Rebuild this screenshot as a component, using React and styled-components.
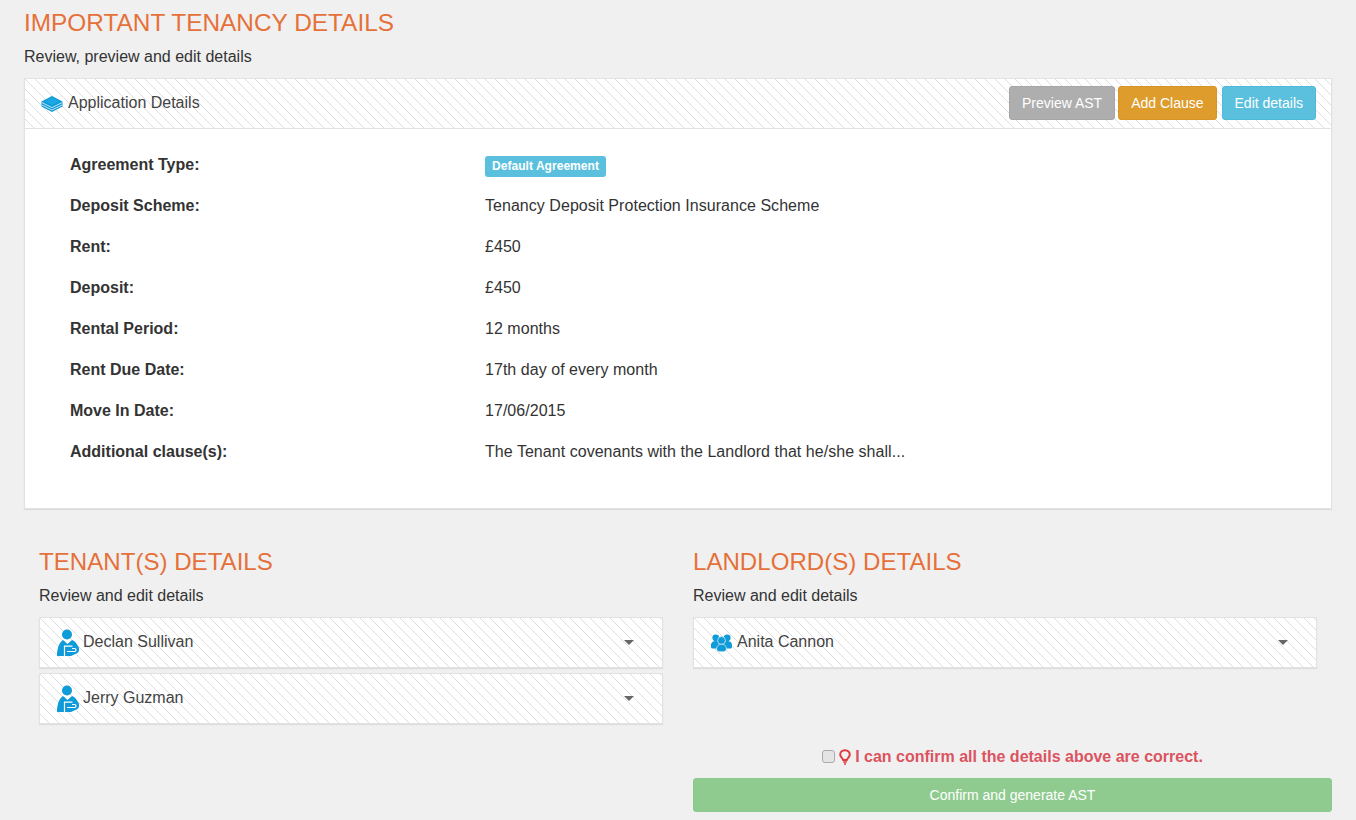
import React from 'react'
import styled, { createGlobalStyle } from 'styled-components'

const GlobalStyle = createGlobalStyle`
  html, body {
    margin: 0;
    padding: 0;
    background: #f0f0f0;
  }
  body {
    font-family: "Liberation Sans", Arial, sans-serif;
    font-size: 16px;
    line-height: 20px;
    color: #333;
  }
`

const hatch = `
  background-color: #fff;
  background-image: linear-gradient(45deg, #dedede 0, #dedede 5%, transparent 5%, transparent 50%, #dedede 50%, #dedede 55%, transparent 55%);
  background-size: 10px 10px;
`

const Page = styled.div`
  width: 1356px;
  height: 820px;
  overflow: hidden;
  padding: 9px 24px 0;
  box-sizing: border-box;
`

const Title = styled.h2`
  margin: 0;
  font-size: ${p => p.$size || 24.1}px;
  line-height: 28px;
  font-weight: 400;
  text-transform: uppercase;
  color: #e6703a;
`

const Sub = styled.p`
  margin: 10px 0 0;
  line-height: 20px;
  color: #333;
`

const Panel = styled.section`
  margin-top: 11px;
  height: 431px;
  box-sizing: border-box;
  background: #fff;
  border: 1px solid #e2e2e2;
  box-shadow: 0 1px 1px rgba(0, 0, 0, 0.08);
`

const PanelHead = styled.header`
  ${hatch}
  height: 50px;
  box-sizing: border-box;
  border-bottom: 1px solid #e2e2e2;
  display: flex;
  align-items: center;
  justify-content: space-between;
  padding: 0 15px 0 16px;
`

const HeadTitle = styled.div`
  display: flex;
  align-items: center;
  gap: 5px;
  color: #444;
`

const HeadText = styled.span`
  margin-top: -2px;
`

const Actions = styled.div`
  display: flex;
  margin-top: -1px;
`

const Btn = styled.button`
  height: 34px;
  padding: 0 12px;
  margin-left: ${p => p.$gap || 0}px;
  font: 14px "Liberation Sans", Arial, sans-serif;
  color: #fff;
  border-radius: 3px;
  border: 1px solid ${p => p.$border};
  background: ${p => p.$bg};
`

const Details = styled.dl`
  margin: 0;
  padding: 15px 45px 0;
  display: grid;
  grid-template-columns: 415px 1fr;
  grid-auto-rows: 41px;
  align-items: center;
`

const Label = styled.dt`
  font-weight: 700;
  color: #333;
`

const Value = styled.dd`
  margin: 0;
  color: #333;
  letter-spacing: 0.04px;
`

const Badge = styled.span`
  display: inline-block;
  height: 21px;
  line-height: 21px;
  margin-top: 4px;
  padding: 0 7px;
  border-radius: 3px;
  font-size: 12px;
  font-weight: 700;
  color: #fff;
  background: #5bc0de;
  vertical-align: middle;
`

const Columns = styled.div`
  display: grid;
  grid-template-columns: 624px 624px;
  gap: 30px;
  margin: 39px 0 0 15px;
`

const Column = styled.div`
  display: flex;
  flex-direction: column;
`

const Accordion = styled.div`
  ${hatch}
  height: 51px;
  box-sizing: border-box;
  margin-top: ${p => p.$first ? '11px' : '5px'};
  border: 1px solid #e2e2e2;
  box-shadow: 0 1px 1px rgba(0, 0, 0, 0.08);
  display: flex;
  align-items: center;
  padding: 0 28px 0 17px;
  color: #444;
  gap: 4px;
`

const Name = styled.span`
  flex: 1;
  margin-top: -2px;
`

const Caret = styled.span`
  width: 0;
  height: 0;
  border-left: 5px solid transparent;
  border-right: 5px solid transparent;
  border-top: 5px solid #666;
`

const Confirm = styled.div`
  width: 639px;
  margin-left: 669px;
  padding-top: 19px;
`

const ConfirmLine = styled.label`
  display: flex;
  align-items: center;
  justify-content: center;
  height: 28px;
  margin-bottom: 7px;
  font-size: 16px;
  font-weight: 700;
  color: #dc5360;
`

const Check = styled.input`
  appearance: none;
  width: 13px;
  height: 13px;
  margin: 0 4px 2px 0;
  box-sizing: border-box;
  background: #e4e4e4;
  border: 1px solid #ababab;
  border-radius: 3px;
`

const Submit = styled.button`
  display: block;
  width: 100%;
  height: 34px;
  font: 14px "Liberation Sans", Arial, sans-serif;
  color: #fff;
  background: #8fcb8f;
  border: 1px solid #8cc98c;
  border-radius: 3px;
`

const StackIcon = () => (
  <svg width="22" height="16" viewBox="0 0 22 16">
    <path d="M11 0 L21.5 5.5 L21.5 10.5 L11 16 L0.5 10.5 L0.5 5.5 Z" fill="#0f9ad8" />
    <path d="M1 6.6 L11 11.6 L21 6.6 M1 9 L11 14 L21 9" fill="none" stroke="#d4effb" strokeWidth="0.9" />
    <path d="M11 1.6 L18.5 5.3 L11 9.2 L3.5 5.3 Z" fill="#1ba7e4" />
  </svg>
)

const TenantIcon = () => (
  <svg width="22" height="27" viewBox="0 0 22 27">
    <circle cx="10" cy="5.5" r="5" fill="#0f9ad8" />
    <path d="M0 27 C0 19 2.5 13 6 11 L10.5 15 L15 11 C18 12 20 14.5 20.8 17 C22.8 18.5 22.6 23 20 24.3 L14 27 Z" fill="#0f9ad8" />
    <path d="M7.5 27 L7.5 17.2 L15.5 17.2" fill="none" stroke="#fff" strokeWidth="1.2" />
    <path d="M15 19.5 L17.5 19.5 C19.5 19.5 19.5 22.5 17.5 22.5 L10 22.5" fill="none" stroke="#fff" strokeWidth="1.2" />
  </svg>
)

const UsersIcon = () => (
  <svg width="22" height="18" viewBox="0 0 22 18">
    <circle cx="4.8" cy="3.8" r="3.4" fill="#0f9ad8" />
    <circle cx="16.2" cy="3.8" r="3.4" fill="#0f9ad8" />
    <path d="M0 11 C0 8.5 2 7 4.8 7 C7.6 7 9.6 8.5 9.6 11 L9.6 14.5 L1.5 14.5 Q0 14.5 0 13 Z" fill="#0f9ad8" />
    <path d="M21 11 C21 8.5 19 7 16.2 7 C13.4 7 11.4 8.5 11.4 11 L11.4 14.5 L19.5 14.5 Q21 14.5 21 13 Z" fill="#0f9ad8" />
    <circle cx="10.5" cy="6.5" r="3.9" fill="#0f9ad8" stroke="#fff" strokeWidth="0.6" />
    <path d="M5.5 15 C5.5 12 7.5 10.2 10.5 10.2 C13.5 10.2 15.5 12 15.5 15 C15.5 17 13.5 17.8 10.5 17.8 C7.5 17.8 5.5 17 5.5 15 Z" fill="#0f9ad8" stroke="#fff" strokeWidth="0.6" />
  </svg>
)

const BulbIcon = () => (
  <svg width="12" height="16" viewBox="0 0 12 16" style={{ marginRight: 4 }}>
    <path d="M6 1.2 C3 1.2 1.2 3.2 1.2 5.5 C1.2 8 3.6 9 4.2 11 L7.8 11 C8.4 9 10.8 8 10.8 5.5 C10.8 3.2 9 1.2 6 1.2 Z" fill="none" stroke="#e0393e" strokeWidth="2" />
    <path d="M4.2 13 L7.8 13 M5 15 L7 15" stroke="#e0393e" strokeWidth="1.5" />
  </svg>
)

const rows = [
  ['Deposit Scheme:', 'Tenancy Deposit Protection Insurance Scheme'],
  ['Rent:', '£450'],
  ['Deposit:', '£450'],
  ['Rental Period:', '12 months'],
  ['Rent Due Date:', '17th day of every month'],
  ['Move In Date:', '17/06/2015'],
  ['Additional clause(s):', 'The Tenant covenants with the Landlord that he/she shall...'],
]

export default function App() {
  return (
    <Page>
      <GlobalStyle />
      <Title $size={24.4}>Important Tenancy Details</Title>
      <Sub>Review, preview and edit details</Sub>
      <Panel>
        <PanelHead>
          <HeadTitle>
            <StackIcon />
            <HeadText>Application Details</HeadText>
          </HeadTitle>
          <Actions>
            <Btn $bg="#aeaeae" $border="#a6a6a6">Preview AST</Btn>
            <Btn $gap={3} $bg="#dd9c2b" $border="#d59527">Add Clause</Btn>
            <Btn $gap={5} $bg="#5bc0de" $border="#4fb9d9">Edit details</Btn>
          </Actions>
        </PanelHead>
        <Details>
          <Label>Agreement Type:</Label>
          <Value><Badge>Default Agreement</Badge></Value>
          {rows.map(([label, value]) => (
            <React.Fragment key={label}>
              <Label>{label}</Label>
              <Value>{value}</Value>
            </React.Fragment>
          ))}
        </Details>
      </Panel>
      <Columns>
        <Column>
          <Title>Tenant(s) Details</Title>
          <Sub>Review and edit details</Sub>
          <Accordion $first>
            <TenantIcon />
            <Name>Declan Sullivan</Name>
            <Caret />
          </Accordion>
          <Accordion>
            <TenantIcon />
            <Name>Jerry Guzman</Name>
            <Caret />
          </Accordion>
        </Column>
        <Column>
          <Title>Landlord(s) Details</Title>
          <Sub>Review and edit details</Sub>
          <Accordion $first>
            <UsersIcon />
            <Name>Anita Cannon</Name>
            <Caret />
          </Accordion>
        </Column>
      </Columns>
      <Confirm>
        <ConfirmLine>
          <Check type="checkbox" />
          <BulbIcon />
          I can confirm all the details above are correct.
        </ConfirmLine>
        <Submit>Confirm and generate AST</Submit>
      </Confirm>
    </Page>
  )
}
